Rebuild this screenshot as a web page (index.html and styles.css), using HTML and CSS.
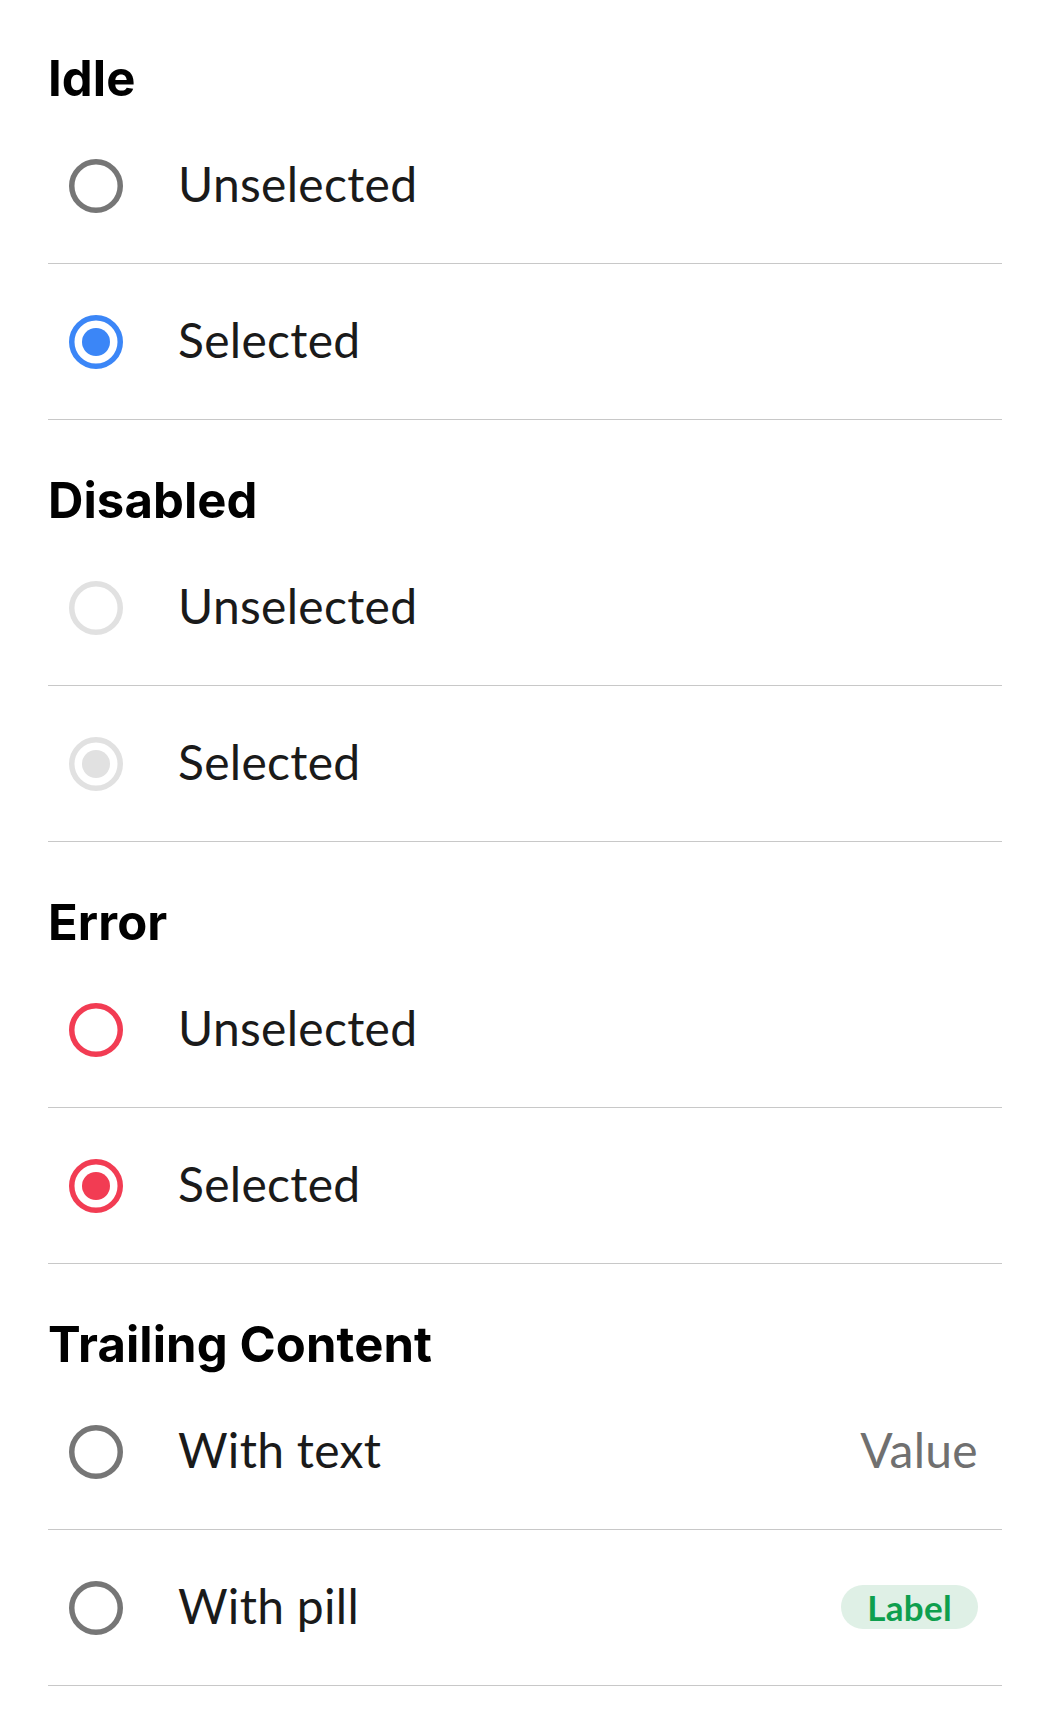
FILE: index.html
```html
<!DOCTYPE html>
<html>
<head>
<meta charset="utf-8">
<link rel="stylesheet" href="styles.css">
</head>
<body>
<div class="page">
  <section class="group">
    <h2 class="heading">Idle</h2>
    <div class="row">
      <svg class="radio" viewBox="0 0 54 54"><circle class="ring gray" cx="27" cy="27" r="24.25"/></svg>
      <span class="label">Unselected</span>
    </div>
    <div class="row">
      <svg class="radio" viewBox="0 0 54 54"><circle class="ring blue" cx="27" cy="27" r="24.25"/><circle class="dot blue-fill" cx="27" cy="27" r="14"/></svg>
      <span class="label">Selected</span>
    </div>
  </section>
  <section class="group">
    <h2 class="heading">Disabled</h2>
    <div class="row">
      <svg class="radio" viewBox="0 0 54 54"><circle class="ring light" cx="27" cy="27" r="24.25"/></svg>
      <span class="label">Unselected</span>
    </div>
    <div class="row">
      <svg class="radio" viewBox="0 0 54 54"><circle class="ring light" cx="27" cy="27" r="24.25"/><circle class="dot light-fill" cx="27" cy="27" r="14"/></svg>
      <span class="label">Selected</span>
    </div>
  </section>
  <section class="group">
    <h2 class="heading">Error</h2>
    <div class="row">
      <svg class="radio" viewBox="0 0 54 54"><circle class="ring red" cx="27" cy="27" r="24.25"/></svg>
      <span class="label">Unselected</span>
    </div>
    <div class="row">
      <svg class="radio" viewBox="0 0 54 54"><circle class="ring red" cx="27" cy="27" r="24.25"/><circle class="dot red-fill" cx="27" cy="27" r="14"/></svg>
      <span class="label">Selected</span>
    </div>
  </section>
  <section class="group">
    <h2 class="heading">Trailing Content</h2>
    <div class="row">
      <svg class="radio" viewBox="0 0 54 54"><circle class="ring gray" cx="27" cy="27" r="24.25"/></svg>
      <span class="label">With text</span>
      <span class="value">Value</span>
    </div>
    <div class="row">
      <svg class="radio" viewBox="0 0 54 54"><circle class="ring gray" cx="27" cy="27" r="24.25"/></svg>
      <span class="label">With pill</span>
      <span class="pill">Label</span>
    </div>
  </section>
</div>
</body>
</html>
```
FILE: styles.css
```css
html, body {
  margin: 0;
  padding: 0;
  background: #ffffff;
}

.page {
  padding: 0 48px;
  margin-top: -2px;
  font-family: "Lato", "Open Sans", sans-serif;
  color: #1a1a1a;
}

.heading {
  margin: 0;
  padding-top: 52px;
  height: 58px;
  line-height: 58px;
  font-family: "Inter", "Roboto", sans-serif;
  font-weight: 700;
  font-size: 49px;
  color: #000000;
  letter-spacing: 0.1px;
}

.row {
  display: flex;
  align-items: center;
  height: 155px;
  border-bottom: 1px solid #c8c8c8;
  padding: 0 24px 0 21px;
}

.radio {
  width: 54px;
  height: 54px;
  flex: none;
}

.ring {
  fill: none;
  stroke-width: 5.5;
}

.gray { stroke: #767676; }
.blue { stroke: #3b86f7; }
.light { stroke: #e1e1e1; }
.red { stroke: #f23c53; }

.blue-fill { fill: #3b86f7; }
.light-fill { fill: #e1e1e1; }
.red-fill { fill: #f23c53; }

.label {
  margin-left: 55px;
  font-size: 48px;
  line-height: 58px;
  margin-top: -4px;
  flex: 1;
  letter-spacing: 0.3px;
}

.value {
  font-size: 48px;
  line-height: 58px;
  margin-top: -4px;
  color: #707070;
  letter-spacing: 0.3px;
}

.pill {
  height: 44px;
  line-height: 44px;
  margin-top: -2px;
  padding: 0 26px;
  border-radius: 22px;
  background: #dff0e6;
  color: #0e9f4e;
  font-size: 35px;
  font-weight: 700;
  letter-spacing: 0.3px;
}
```
